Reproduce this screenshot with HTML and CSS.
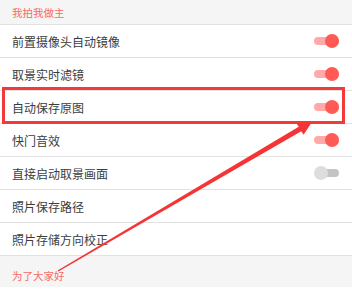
FILE: index.html
```html
<!DOCTYPE html>
<html lang="zh-CN">
<head>
<meta charset="utf-8">
<link rel="stylesheet" href="styles.css">
</head>
<body>
<div class="page">
  <div class="section-title">我拍我做主</div>
  <div class="list">
    <div class="row"><span class="label">前置摄像头自动镜像</span><span class="switch on"></span></div>
    <div class="row"><span class="label">取景实时滤镜</span><span class="switch on"></span></div>
    <div class="row"><span class="label">自动保存原图</span><span class="switch on"></span></div>
    <div class="row"><span class="label">快门音效</span><span class="switch on"></span></div>
    <div class="row"><span class="label">直接启动取景画面</span><span class="switch off"></span></div>
    <div class="row"><span class="label">照片保存路径</span></div>
    <div class="row"><span class="label">照片存储方向校正</span></div>
  </div>
  <div class="section-title footer">为了大家好</div>
  <div class="highlight"></div>
  <svg class="arrow" width="352" height="297" viewBox="0 0 352 297">
    <polygon points="57.6,270.6 298.7,126.8 296.4,123.2 312,122 303.6,134.8 301.3,131.2 58.4,271.4" fill="#f53535"/>
  </svg>
</div>
</body>
</html>
```
FILE: styles.css
```css
html, body {
  margin: 0;
  padding: 0;
  background: #ffffff;
}
body {
  font-family: "Noto Sans CJK SC", "Noto Sans", sans-serif;
}
.page {
  position: relative;
  width: 352px;
  height: 297px;
  overflow: hidden;
}
.section-title {
  height: 24px;
  background: #f5f5f5;
  color: #f76a66;
  font-size: 10.5px;
  display: flex;
  align-items: center;
  padding-left: 12px;
  padding-top: 1px;
  box-sizing: border-box;
  height: 25px;
  border-bottom: 1px solid #e2e2e2;
}
.section-title.footer {
  height: 31px;
  border-bottom: none;
  padding-top: 8px;
}
.row {
  height: 32px;
  border-bottom: 1px solid #e2e2e2;
  display: flex;
  align-items: center;
  justify-content: space-between;
  padding: 0 13px 0 12px;
}
.label {
  font-size: 12px;
  color: #3c3c3c;
}
.switch {
  position: relative;
  width: 25px;
  height: 14px;
}
.switch::before {
  content: "";
  position: absolute;
  left: 0;
  right: 0;
  top: 3px;
  height: 8px;
  border-radius: 4px;
}
.switch::after {
  content: "";
  position: absolute;
  top: 0;
  width: 14px;
  height: 14px;
  border-radius: 50%;
}
.switch.on::before { background: #ffaaa8; }
.switch.on::after { right: 0; background: #ff5a55; }
.switch.off::before { background: #c4c4c4; left: 4px; }
.switch.off::after { left: 0; background: #dddddd; }
.highlight {
  position: absolute;
  left: 2px;
  top: 87px;
  width: 337px;
  height: 31px;
  border: 3px solid #f23a3a;
}
.arrow {
  position: absolute;
  left: 0;
  top: 0;
}
```
